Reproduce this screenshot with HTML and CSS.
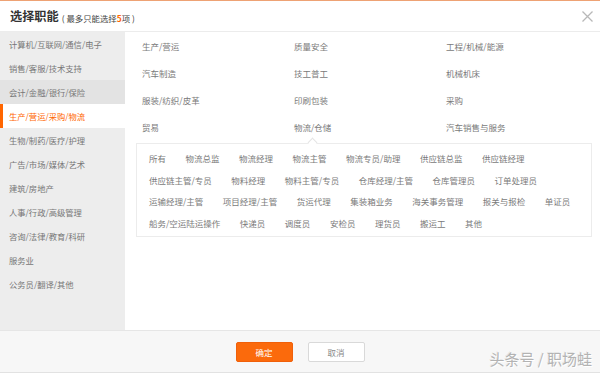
FILE: index.html
```html
<!DOCTYPE html>
<html lang="zh-CN">
  <head>
    <meta charset="UTF-8" />
    <meta name="viewport" content="width=device-width, initial-scale=1.0" />
    <title>选择职能</title>
    <link rel="stylesheet" href="styles.css">
  </head>

  <body>
    <div class="dialog">
      <header class="dialog-head">
        <h1>选择职能</h1>
        <span class="limit">( 最多只能选择<em>5</em>项 )</span>
        <button class="close" type="button" aria-label="关闭">
          <svg width="11" height="11" viewBox="0 0 11 11">
            <path d="M0.5 0.5 L10.5 10.5 M10.5 0.5 L0.5 10.5" stroke="#b8b8b8" stroke-width="1.3" fill="none" />
          </svg>
        </button>
      </header>

      <div class="dialog-body">
        <ul class="cats">
          <li>计算机/互联网/通信/电子</li>
          <li>销售/客服/技术支持</li>
          <li class="hover">会计/金融/银行/保险</li>
          <li class="active">生产/营运/采购/物流</li>
          <li>生物/制药/医疗/护理</li>
          <li>广告/市场/媒体/艺术</li>
          <li>建筑/房地产</li>
          <li>人事/行政/高级管理</li>
          <li>咨询/法律/教育/科研</li>
          <li>服务业</li>
          <li>公务员/翻译/其他</li>
        </ul>

        <div class="subs">
          <div class="sub-grid">
            <span>生产/营运</span>
            <span>质量安全</span>
            <span>工程/机械/能源</span>
            <span>汽车制造</span>
            <span>技工普工</span>
            <span>机械机床</span>
            <span>服装/纺织/皮革</span>
            <span>印刷包装</span>
            <span>采购</span>
            <span>贸易</span>
            <span>物流/仓储</span>
            <span>汽车销售与服务</span>
          </div>

          <div class="pop">
            <span>所有</span>
            <span>物流总监</span>
            <span>物流经理</span>
            <span>物流主管</span>
            <span>物流专员/助理</span>
            <span>供应链总监</span>
            <span>供应链经理</span>
            <span>供应链主管/专员</span>
            <span>物料经理</span>
            <span>物料主管/专员</span>
            <span>仓库经理/主管</span>
            <span>仓库管理员</span>
            <span>订单处理员</span>
            <span>运输经理/主管</span>
            <span>项目经理/主管</span>
            <span>货运代理</span>
            <span>集装箱业务</span>
            <span>海关事务管理</span>
            <span>报关与报检</span>
            <span>单证员</span>
            <span>船务/空运陆运操作</span>
            <span>快递员</span>
            <span>调度员</span>
            <span>安检员</span>
            <span>理货员</span>
            <span>搬运工</span>
            <span>其他</span>
          </div>
        </div>
      </div>

      <footer class="dialog-foot">
        <button class="btn btn-ok" type="button">确定</button>
        <button class="btn btn-cancel" type="button">取消</button>
        <span class="watermark">头条号 / 职场蛙</span>
      </footer>
    </div>
  </body>
</html>
```

FILE: styles.css
```css
body {
    margin: 0;
    padding: 0;
    width: 600px;
    height: 373px;
    overflow: hidden;
    background-color: #fff;
    font-family: "Noto Sans CJK SC", "Noto Sans", sans-serif;
    color: #555;
}

.dialog {
    width: 600px;
    height: 373px;
    display: flex;
    flex-direction: column;
}

.dialog-head {
    height: 30px;
    border-top: 1px solid #eea274;
    border-bottom: 1px solid #ececec;
    display: flex;
    align-items: center;
    padding: 0 7px 0 10px;
}

.dialog-head h1 {
    margin: 0;
    font-size: 12.2px;
    font-weight: bold;
    color: #333;
    line-height: 1;
}

.limit {
    margin-left: 3px;
    margin-top: 3px;
    font-size: 8.4px;
    color: #444;
}

.limit em {
    font-style: normal;
    font-weight: bold;
    color: #f60;
}

.close {
    margin-left: auto;
    border: none;
    background: none;
    padding: 0;
    width: 11px;
    height: 11px;
    display: flex;
    cursor: pointer;
}

.dialog-body {
    flex: 1;
    display: flex;
}

.cats {
    list-style: none;
    margin: 0;
    padding: 0;
    width: 125px;
    background-color: #ededed;
}

.cats li {
    height: 24px;
    line-height: 24px;
    padding-left: 9px;
    font-size: 8.3px;
    color: #777;
    white-space: nowrap;
}

.cats li.hover {
    background-color: #e3e3e3;
}

.cats li.active {
    background-color: #fff;
    color: #f60;
    border-left: 3px solid #f60;
    padding-left: 6px;
}

.subs {
    flex: 1;
    font-size: 8.5px;
    color: #7a7a7a;
}

.sub-grid {
    display: grid;
    grid-template-columns: repeat(3, 152px);
    grid-auto-rows: 27px;
    align-items: center;
    padding-left: 17px;
}

.pop {
    position: relative;
    margin: 3px 8px 0 11px;
    border: 1px solid #ececec;
    padding: 4px 11px 2px 12px;
    display: flex;
    flex-wrap: wrap;
    column-gap: 19.5px;
}

.pop span {
    height: 21.5px;
    line-height: 21.5px;
    white-space: nowrap;
}

/* little caret pointing at 物流/仓储 */
.pop::before {
    content: "";
    position: absolute;
    top: -5px;
    left: 172px;
    width: 6px;
    height: 6px;
    background-color: #fff;
    border-top: 1px solid #e4e4e4;
    border-left: 1px solid #e4e4e4;
    transform: rotate(45deg);
}

.dialog-foot {
    position: relative;
    height: 41px;
    border-top: 1px solid #e6e6e6;
    border-bottom: 1px solid #e2e2e2;
    background-color: #f7f7f7;
    display: flex;
    justify-content: center;
    align-items: flex-start;
    gap: 15px;
}

.btn {
    margin-top: 11px;
    width: 57px;
    height: 20px;
    font-family: inherit;
    font-size: 8.5px;
    border-radius: 2px;
    padding: 0;
    cursor: pointer;
}

.btn-ok {
    background-color: #fb6a0c;
    border: 1px solid #f0600a;
    color: #fff;
}

.btn-cancel {
    background-color: #fff;
    border: 1px solid #d9d9d9;
    color: #888;
}

.watermark {
    position: absolute;
    right: 8px;
    bottom: 3px;
    font-size: 15px;
    color: #b3b3b3;
    text-shadow: 1px 1px 0 #fff, -1px -1px 0 rgba(0, 0, 0, 0.07);
    white-space: nowrap;
}
```
